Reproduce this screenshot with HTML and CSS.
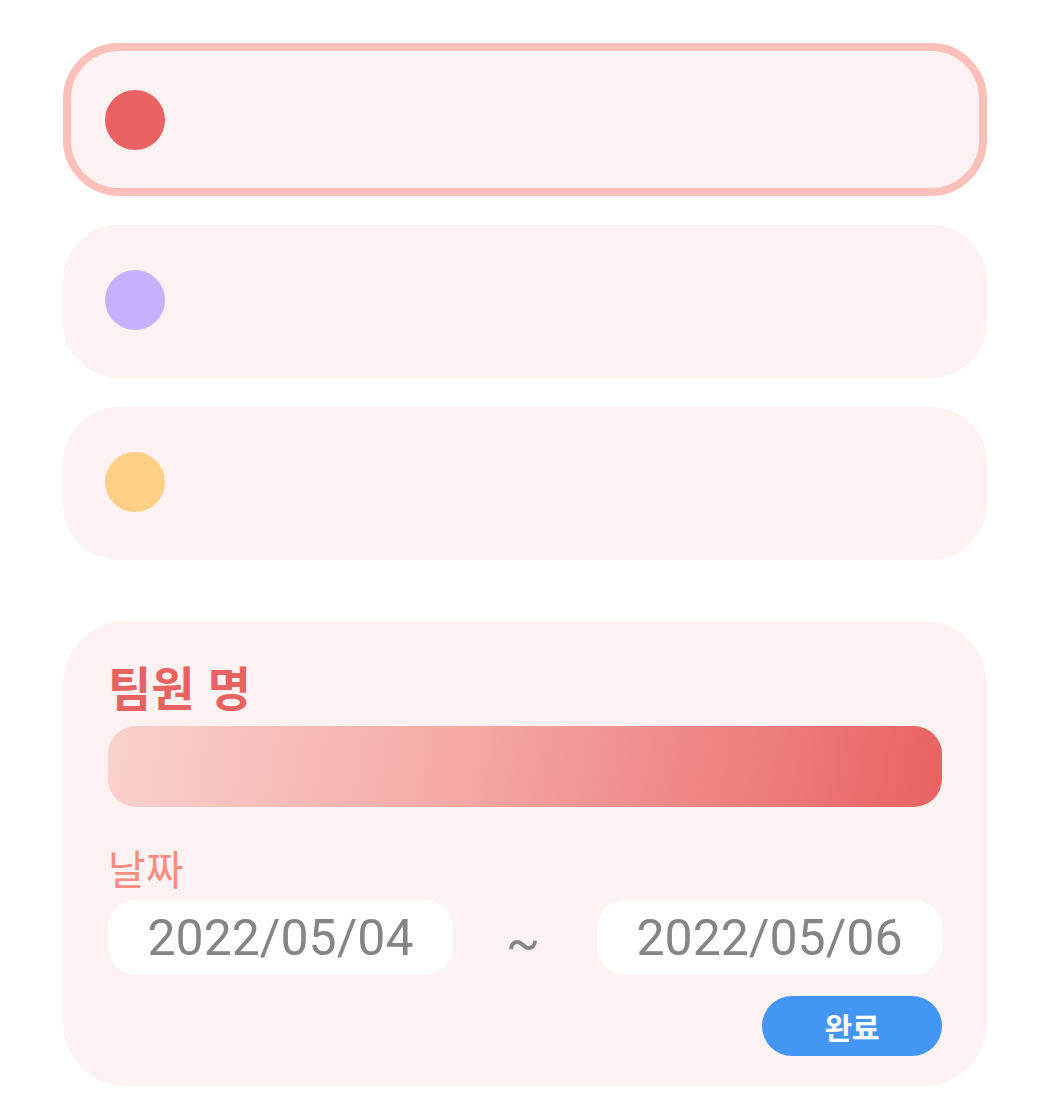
FILE: index.html
```html
<!DOCTYPE html>
<html lang="ko">
<head>
<meta charset="utf-8">
<link rel="stylesheet" href="styles.css">
</head>
<body>
<div class="page">
  <div class="row row-active"><span class="dot dot-red"></span></div>
  <div class="row"><span class="dot dot-purple"></span></div>
  <div class="row"><span class="dot dot-yellow"></span></div>

  <div class="panel">
    <h2 class="title">팀원 명</h2>
    <div class="bar"></div>
    <div class="label">날짜</div>
    <div class="dates">
      <div class="date">2022/05/04</div>
      <span class="tilde">~</span>
      <div class="date">2022/05/06</div>
    </div>
    <div class="actions">
      <button class="done">완료</button>
    </div>
  </div>
</div>
</body>
</html>
```

FILE: styles.css
```css
html, body {
  margin: 0;
  padding: 0;
  background: #ffffff;
}
body {
  font-family: Roboto, "Noto Sans CJK KR", sans-serif;
}
.page {
  width: 924px;
  margin-left: 63px;
  padding-top: 43px;
  display: flex;
  flex-direction: column;
}
.row {
  box-sizing: border-box;
  height: 153px;
  background: #fdf2f2;
  border-radius: 56px;
  display: flex;
  align-items: center;
  padding-left: 42px;
  padding-bottom: 3px;
  margin-bottom: 29px;
}
.row-active {
  border: 8px solid #fcbfb9;
  padding-left: 34px;
  padding-bottom: 0;
}
.dot {
  width: 60px;
  height: 60px;
  border-radius: 50%;
  display: block;
}
.dot-red { background: #e96262; }
.dot-purple { background: #c8b0fd; }
.dot-yellow { background: #fecf86; }

.panel {
  margin-top: 32px;
  background: #fdf2f2;
  border-radius: 64px;
  padding: 35px 45px 30px 45px;
  display: flex;
  flex-direction: column;
}
.title {
  margin: 0;
  font-family: "Noto Sans CJK KR", sans-serif;
  font-weight: 700;
  font-size: 47px;
  line-height: 60px;
  color: #e96262;
}
.bar {
  margin-top: 10px;
  height: 81px;
  border-radius: 28px;
  background: linear-gradient(100deg, #fad2ce 0%, #f4a6a2 45%, #e96262 100%);
}
.label {
  margin-top: 34px;
  font-family: "Noto Sans CJK KR", sans-serif;
  font-weight: 400;
  font-size: 41px;
  line-height: 52px;
  color: #fc8b80;
}
.dates {
  margin-top: 7px;
  display: flex;
  align-items: center;
  justify-content: space-between;
}
.date {
  width: 345px;
  height: 75px;
  box-sizing: border-box;
  background: #ffffff;
  border-radius: 28px;
  display: flex;
  align-items: center;
  justify-content: center;
  font-family: Roboto, sans-serif;
  font-size: 50px;
  color: #858585;
}
.tilde {
  font-family: Roboto, sans-serif;
  font-size: 50px;
  color: #858585;
  line-height: 1;
  padding-top: 10px;
  padding-right: 4px;
}
.actions {
  margin-top: 21px;
  display: flex;
  justify-content: flex-end;
}
.done {
  width: 180px;
  height: 60px;
  border: none;
  border-radius: 30px;
  background: #4496f4;
  color: #ffffff;
  font-family: "Noto Sans CJK KR", sans-serif;
  font-weight: 700;
  font-size: 30px;
  line-height: 60px;
  padding: 0 0 2px 0;
}
```
